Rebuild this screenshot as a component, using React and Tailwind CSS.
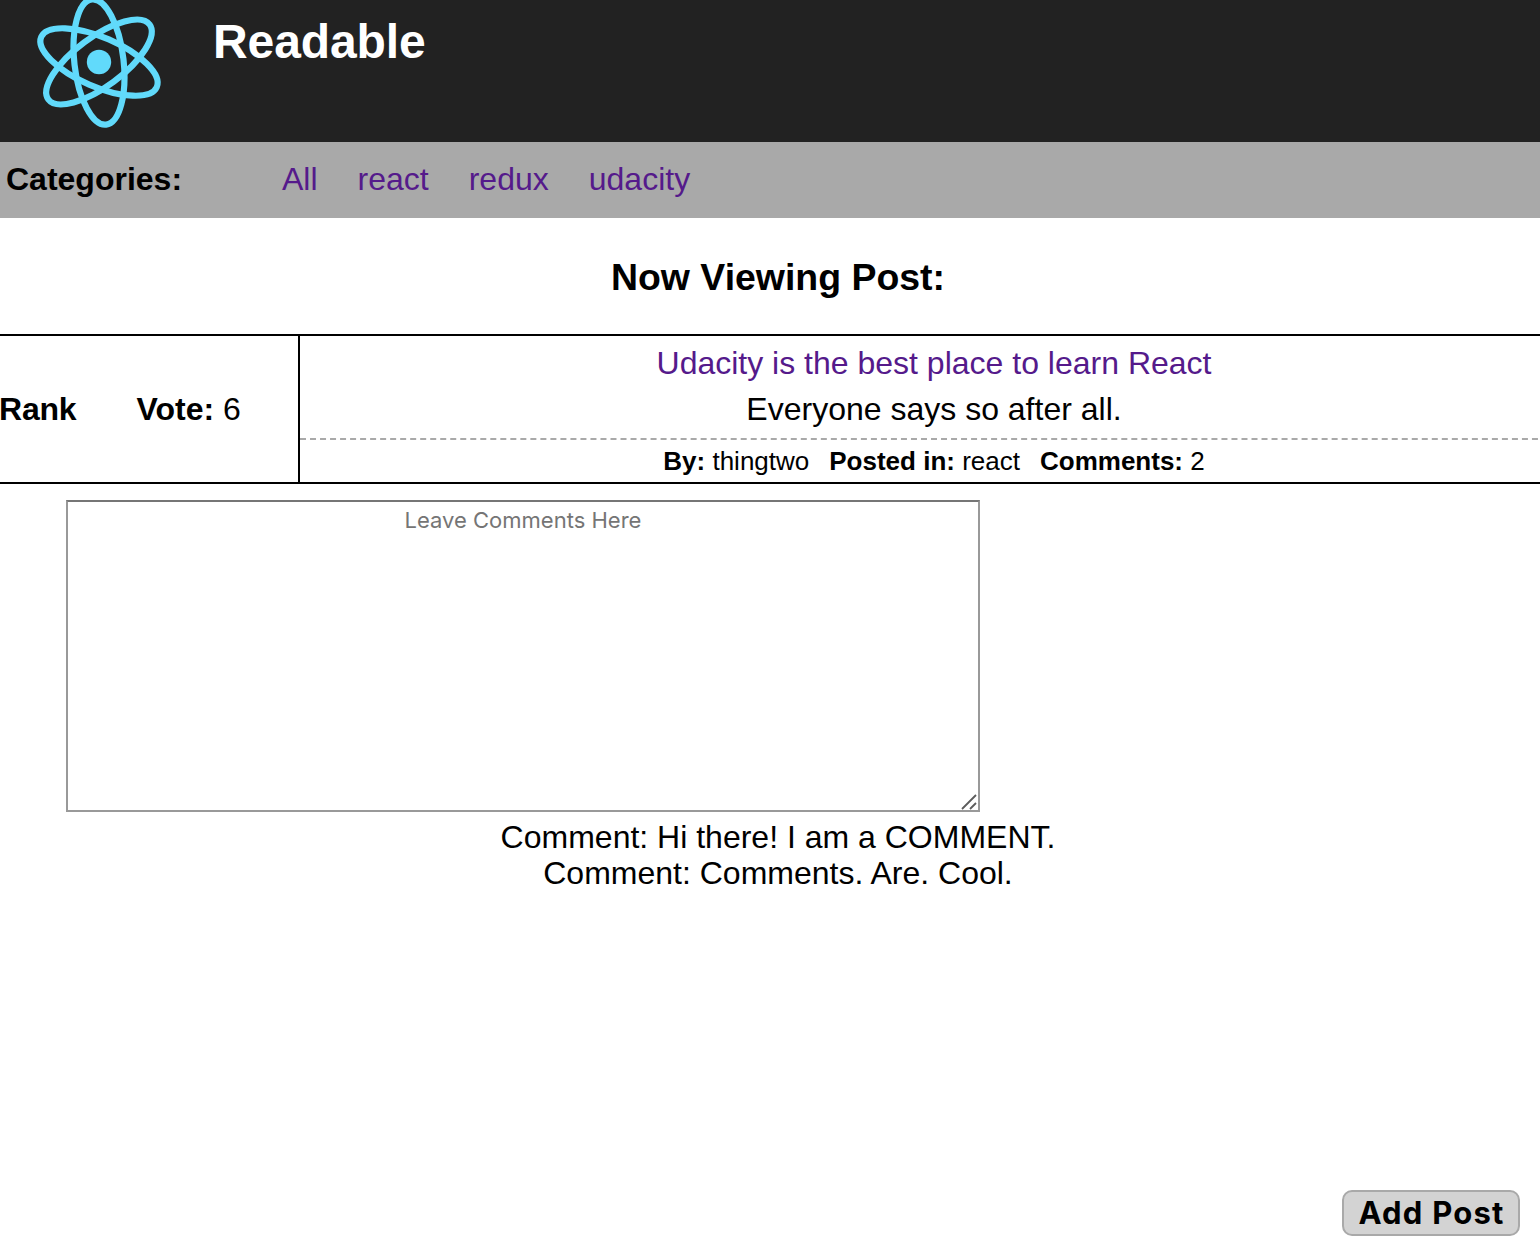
const categories = ["All", "react", "redux", "udacity"];
const comments = ["Hi there! I am a COMMENT.", "Comments. Are. Cool."];

function Logo() {
  return (
    <svg className="ml-[29px] h-[142px] w-[140px] shrink-0" viewBox="0 0 140 142" fill="none" stroke="#61dafb" strokeWidth="6.2">
      <circle cx="70" cy="62" r="12.2" fill="#61dafb" stroke="none" />
      <ellipse cx="70" cy="62" rx="63" ry="24.6" transform="rotate(23.5 70 62)" />
      <ellipse cx="70" cy="62" rx="63" ry="24.6" transform="rotate(83.5 70 62)" />
      <ellipse cx="70" cy="62" rx="63" ry="24.6" transform="rotate(143.5 70 62)" />
    </svg>
  );
}

function Post() {
  return (
    <article className="flex h-[150px] w-[1568px] border-y-2 border-black">
      <div className="flex w-[300px] shrink-0 items-center border-r-2 border-black">
        <b className="-ml-px w-[137.5px] tracking-[-0.2px]">Rank</b>
        <span><b>Vote:</b> 6</span>
      </div>
      <div className="flex flex-1 flex-col text-center">
        <a className="mt-[9px] text-[#551a8b]">Udacity is the best place to learn React</a>
        <p className="mt-[10px]">Everyone says so after all.</p>
        <div className="mt-[11px] flex justify-center gap-[20px] border-t-2 border-dashed border-[#a9a9a9] pt-[6px] text-[26px] leading-[30px]">
          <span><b>By:</b> thingtwo</span>
          <span><b>Posted in:</b> react</span>
          <span><b>Comments:</b> 2</span>
        </div>
      </div>
    </article>
  );
}

function CommentBox() {
  return (
    <div className="relative mt-[16px] ml-[66px] h-[312px] w-[914px]">
      <textarea
        className="block h-full w-full resize-none rounded-none border-2 border-[#999999] border-t-[#767676] bg-white p-[4px] text-center font-['Inter',sans-serif] text-[22px] leading-[28px] placeholder:text-[#757575]"
        placeholder="Leave Comments Here"
      />
      <svg className="absolute right-[3px] bottom-[2px] h-4 w-4" viewBox="0 0 16 16" stroke="#5c5c5c" strokeWidth="1.8">
        <path d="M1 15 15 1M9 15 15 9" />
      </svg>
    </div>
  );
}

export default function App() {
  return (
    <div className="flex h-[1254px] w-[1540px] flex-col overflow-hidden bg-white font-['Liberation_Sans',Arial,sans-serif] text-[32px] leading-[36px] text-black">
      <header className="flex h-[142px] shrink-0 bg-[#222222]">
        <Logo />
        <h1 className="ml-[44px] mt-[14px] text-[48px] font-bold leading-[56px] tracking-[-0.1px] text-white">Readable</h1>
      </header>
      <nav className="flex h-[76px] shrink-0 items-center bg-[#a9a9a9] pb-[2px] pl-[6px]">
        <b className="w-[276px]">Categories:</b>
        <div className="flex gap-[40px] text-[#551a8b]">
          {categories.map((name) => <a key={name}>{name}</a>)}
        </div>
      </nav>
      <main className="w-[1556px]">
        <h2 className="mt-[37px] mb-[35px] text-center text-[37.44px] font-bold leading-[44px]">Now Viewing Post:</h2>
        <Post />
        <CommentBox />
        <section className="mt-[7px] text-center">
          {comments.map((text) => <p key={text}>Comment: {text}</p>)}
        </section>
      </main>
      <button className="mt-auto mr-[20px] mb-[18px] flex h-[46px] w-[178px] shrink-0 items-center justify-center self-end whitespace-nowrap rounded-[10px] border-2 border-[#a9a9a9] bg-[#d3d3d3] pl-px font-['Inter',sans-serif] text-[31px] font-bold tracking-[1.2px]">
        Add Post
      </button>
    </div>
  );
}
